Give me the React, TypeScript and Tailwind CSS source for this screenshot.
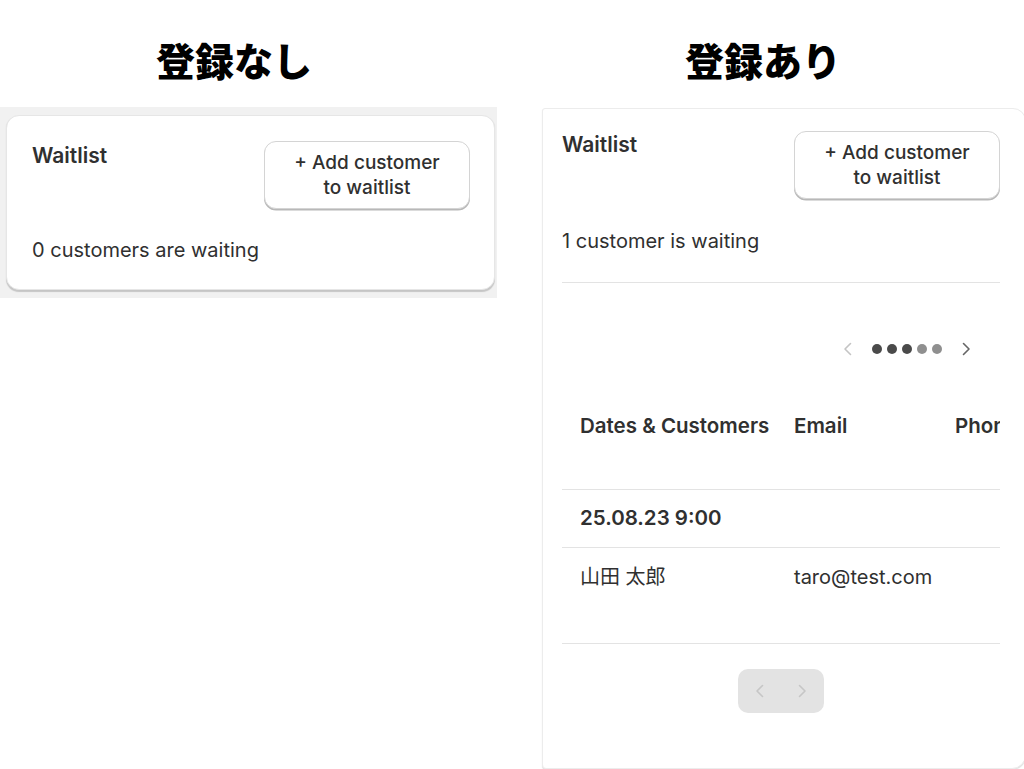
import React from 'react';

const font = { fontFamily: 'Inter, "Noto Sans CJK JP", sans-serif' };

const Chevron: React.FC<{ dir: 'left' | 'right'; className?: string }> = ({ dir, className }) => (
  <svg viewBox="0 0 20 20" className={className || 'w-5 h-5'} fill="none" stroke="currentColor" strokeWidth={1.6} strokeLinecap="round" strokeLinejoin="round">
    {dir === 'left' ? <path d="M12.5 4.5 7 10l5.5 5.5" /> : <path d="M7.5 4.5 13 10l-5.5 5.5" />}
  </svg>
);

const AddButton: React.FC = () => (
  <button className="w-[206px] h-[68px] rounded-[12px] border border-[#d4d4d4] bg-white shadow-[0_1.5px_0_#b8b8b8] text-[19px] leading-[25px] text-[#303030] font-medium">
    + Add customer
    <br />
    to waitlist
  </button>
);

const Heading: React.FC<{ text: string; className?: string }> = ({ text, className }) => (
  <div className={`h-[108px] flex items-center ${className || ''}`}>
    <h1 className="text-[39px] leading-none font-black text-black mt-[14px]">{text}</h1>
  </div>
);

const Dot: React.FC<{ dark?: boolean }> = ({ dark }) => (
  <span className={`w-[10px] h-[10px] rounded-full ${dark ? 'bg-[#4a4a4a]' : 'bg-[#8f8f8f]'}`} />
);

const App: React.FC = () => {
  return (
    <div className="w-[1024px] h-[769px] bg-white flex overflow-hidden" style={font}>
      {/* 登録なし */}
      <div className="w-[497px] flex flex-col">
        <Heading text="登録なし" className="pl-[156px]" />
        <div className="bg-[#f1f1f1] pl-[6px] pr-[2px] pt-[8px] pb-[8px] h-[191px] -mt-[1px]">
          <div className="bg-white rounded-[13px] border border-[#e6e6e6] shadow-[0_1.5px_1px_rgba(0,0,0,0.18)] h-[175px] pl-[25px] pr-[24px] pt-[25px]">
            <div className="flex justify-between">
              <h2 className="text-[21px] font-semibold text-[#303030] leading-[30px]">Waitlist</h2>
              <AddButton />
            </div>
            <p className="mt-[27px] text-[20px] text-[#303030] leading-[28px]">0 customers are waiting</p>
          </div>
        </div>
      </div>

      {/* 登録あり */}
      <div className="ml-[45px] flex-1 flex flex-col">
        <Heading text="登録あり" className="pl-[143px]" />
        <div className="flex-1 bg-white border border-[#ececec] rounded-tl-[3px] rounded-tr-[13px] rounded-br-[14px] rounded-bl-[4px] shadow-[0_1px_1px_rgba(0,0,0,0.12)] pl-[19px] pt-[22px] -mr-[2px]">
          <div className="w-[438px] overflow-hidden">
            <div className="flex justify-between">
              <h2 className="text-[21px] font-semibold text-[#303030] leading-[30px] -mt-[1px]">Waitlist</h2>
              <AddButton />
            </div>
            <p className="mt-[28px] text-[20px] text-[#303030] leading-[28px]">1 customer is waiting</p>
            <div className="mt-[27px] border-t border-[#e3e3e3]" />

            <div className="h-[132px] flex items-start justify-end pr-[24px] pt-[56px]">
              <div className="flex items-center gap-[14px]">
                <Chevron dir="left" className="w-[20px] h-[20px] text-[#c4c4c4]" />
                <div className="flex items-center gap-[5px]">
                  <Dot dark />
                  <Dot dark />
                  <Dot dark />
                  <Dot />
                  <Dot />
                </div>
                <Chevron dir="right" className="w-[20px] h-[20px] text-[#666666]" />
              </div>
            </div>

            <table className="w-[560px] table-fixed border-collapse text-[20px] text-[#303030]">
              <colgroup>
                <col className="w-[232px]" />
                <col className="w-[161px]" />
                <col className="w-[167px]" />
              </colgroup>
              <thead>
                <tr className="border-b border-[#e3e3e3]">
                  <th className="h-[74px] pl-[18px] text-left font-semibold align-top whitespace-nowrap leading-[28px] -translate-y-[3px] text-[20.5px]">Dates &amp; Customers</th>
                  <th className="text-left font-semibold align-top leading-[28px] -translate-y-[3px] text-[20.5px]">Email</th>
                  <th className="text-left font-semibold align-top leading-[28px] whitespace-nowrap -translate-y-[3px] text-[20.5px]">Phone</th>
                </tr>
              </thead>
              <tbody>
                <tr className="border-b border-[#e3e3e3]">
                  <td colSpan={3} className="h-[58px] pl-[18px] font-semibold text-[20.5px] leading-[28px]">25.08.23 9:00</td>
                </tr>
                <tr className="border-b border-[#e3e3e3]">
                  <td className="h-[96px] pl-[18px] align-top pt-[15px] leading-[28px]">山田 太郎</td>
                  <td className="align-top pt-[15px] leading-[28px]">taro@test.com</td>
                  <td className="align-top pt-[15px] leading-[28px]"></td>
                </tr>
              </tbody>
            </table>

            <div className="flex justify-center pt-[25px]">
              <div className="w-[86px] h-[44px] rounded-[10px] bg-[#e3e3e3] flex items-center justify-center gap-[22px]">
                <Chevron dir="left" className="w-[20px] h-[20px] text-[#c6c6c6]" />
                <Chevron dir="right" className="w-[20px] h-[20px] text-[#c6c6c6]" />
              </div>
            </div>
          </div>
        </div>
      </div>
    </div>
  );
};

export default App;
